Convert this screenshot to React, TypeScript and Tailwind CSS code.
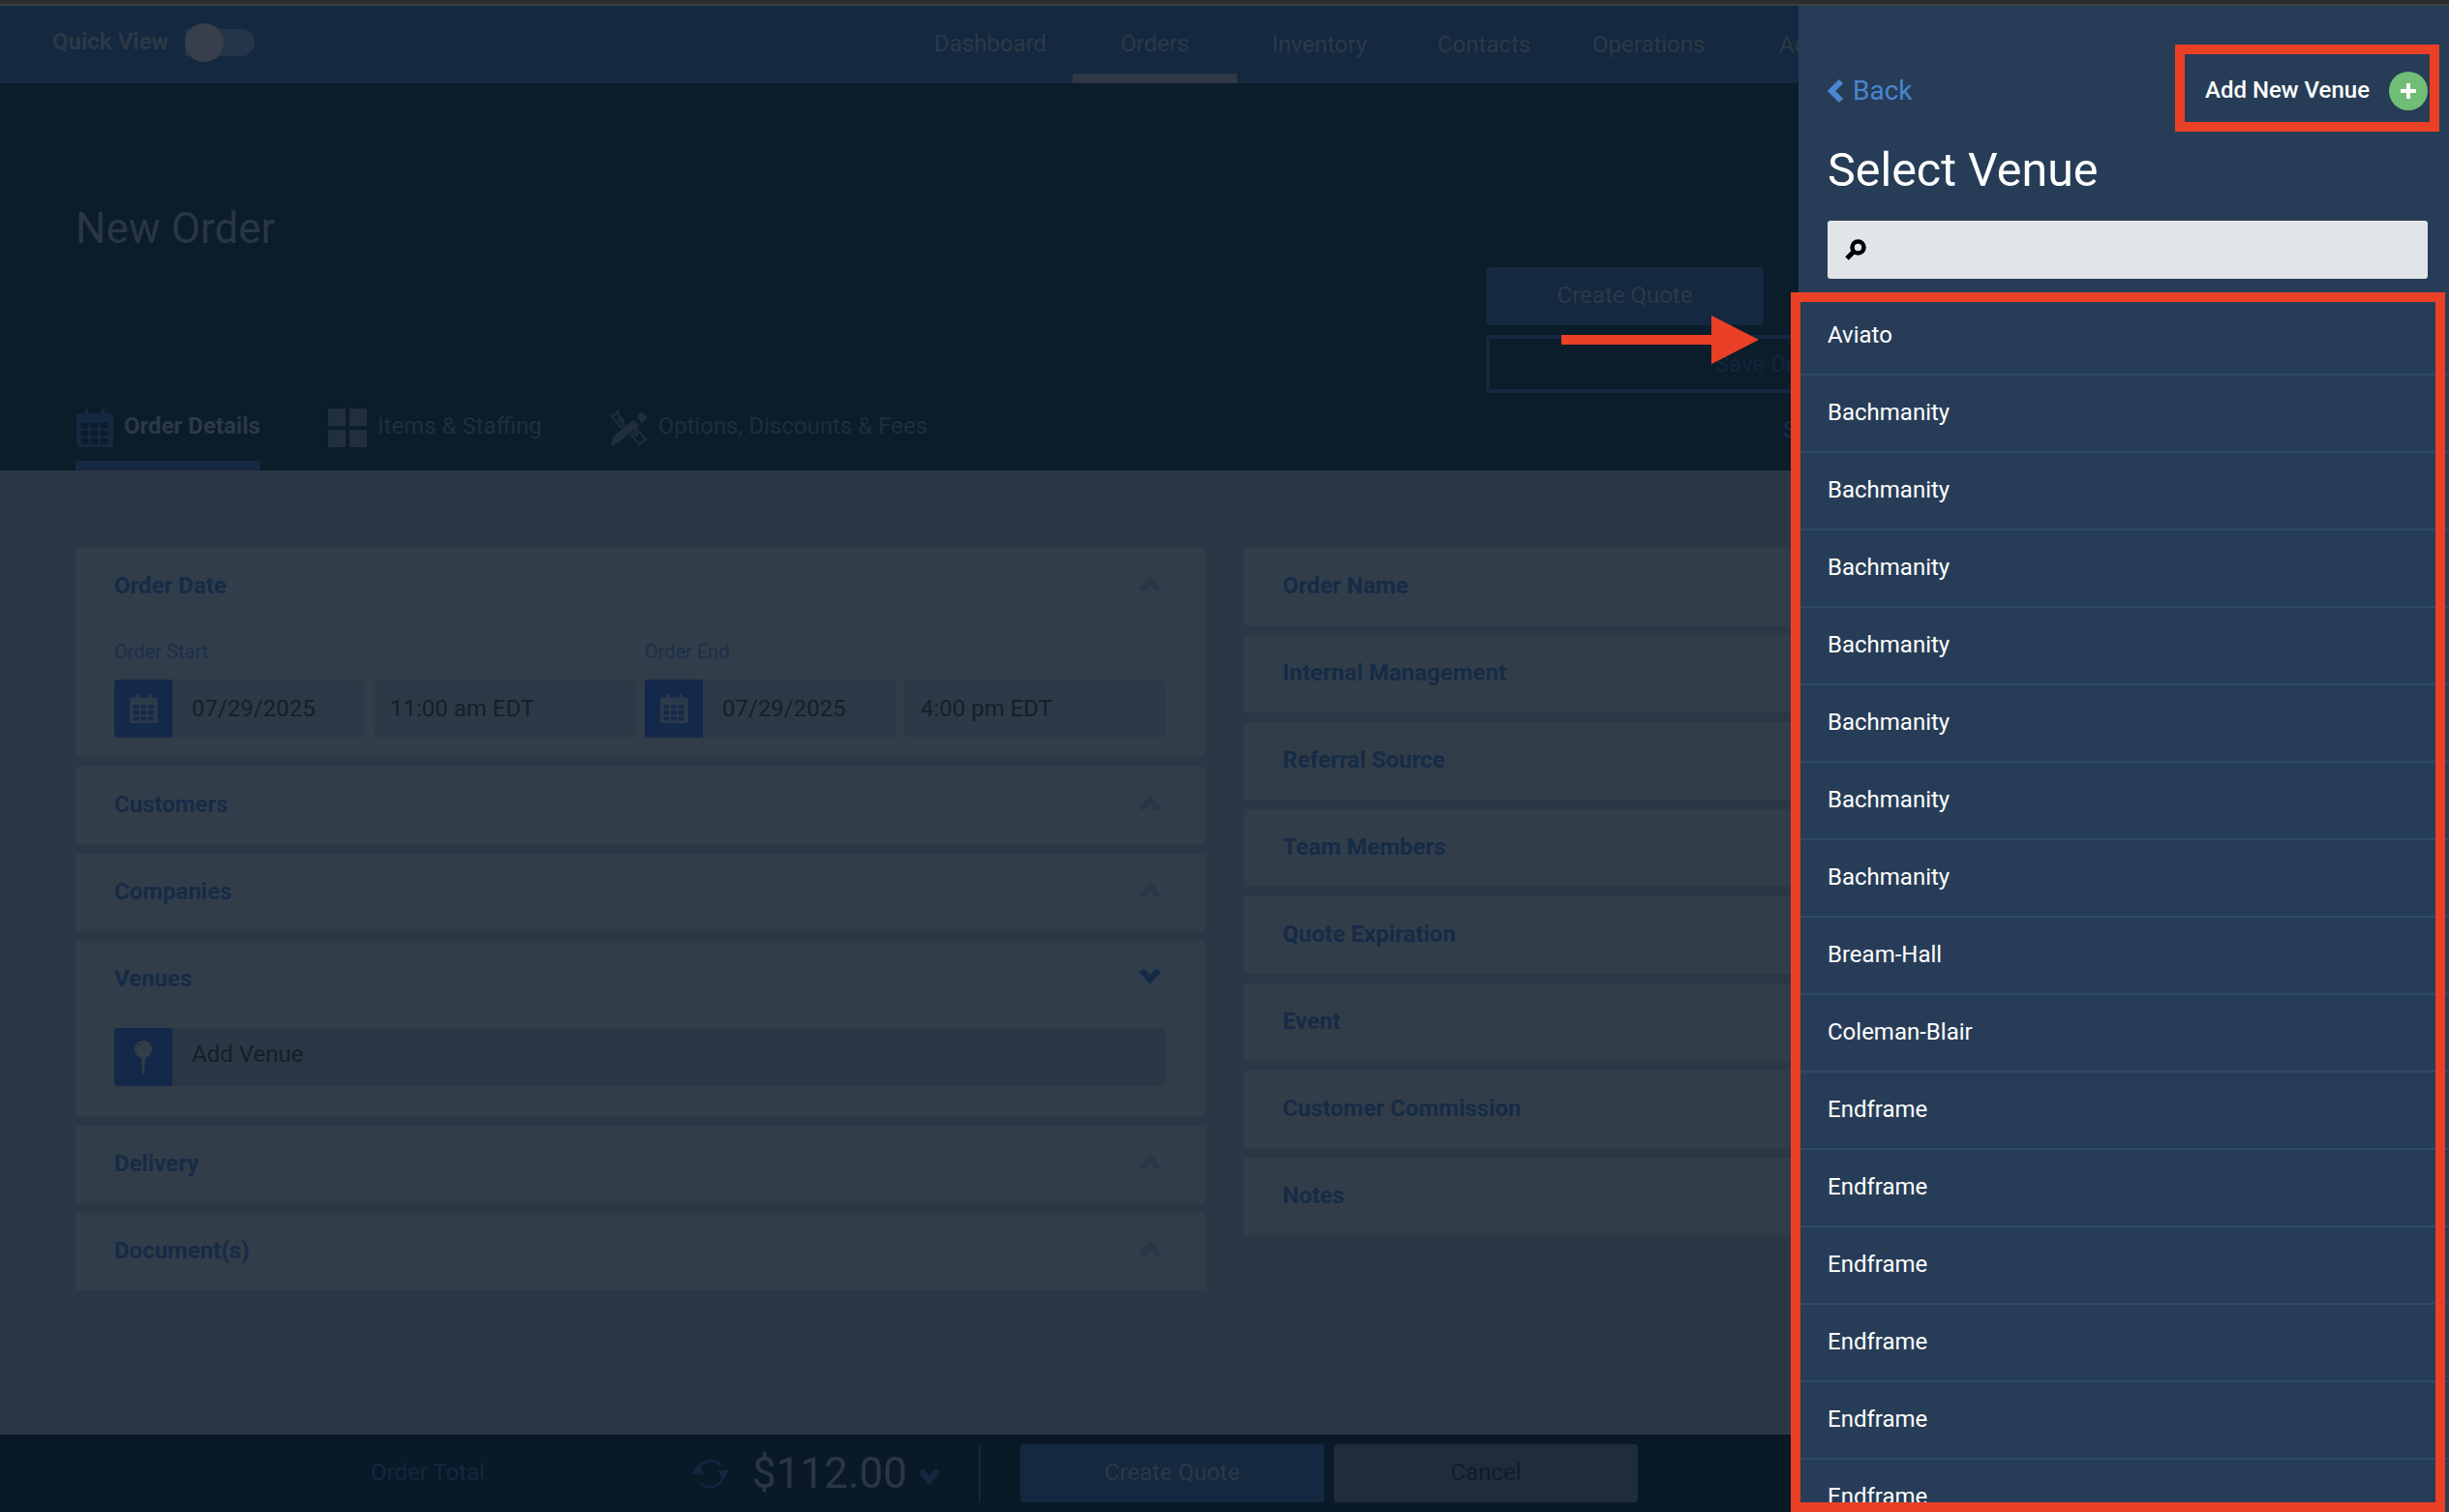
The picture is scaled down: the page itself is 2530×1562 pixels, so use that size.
import React from 'react';

const ChevronUp = ({ className }: { className: string }) => (
  <svg viewBox="0 0 24 16" className={className} fill="none" stroke="currentColor" strokeWidth="6.5">
    <polyline points="3,15 12,5 21,15" />
  </svg>
);

const ChevronDown = ({ className }: { className: string }) => (
  <svg viewBox="0 0 24 16" className={className} fill="none" stroke="currentColor" strokeWidth="6.5">
    <polyline points="3,1 12,11 21,1" />
  </svg>
);

const Calendar = ({ className, dots }: { className: string; dots: string }) => {
  const cells = [];
  for (let r = 0; r < 3; r++) {
    for (let c = 0; c < 3; c++) {
      cells.push(<rect key={`${r}${c}`} x={5 + c * 10.5} y={15.5 + r * 8.5} width="8" height="6" fill={dots} />);
    }
  }
  return (
    <svg viewBox="0 0 40 42" className={className} fill="currentColor">
      <rect x="0" y="5" width="40" height="37" rx="3" />
      <rect x="9" y="0" width="4" height="8" rx="1.5" />
      <rect x="27" y="0" width="4" height="8" rx="1.5" />
      {cells}
    </svg>
  );
};

const GridIcon = () => (
  <svg viewBox="0 0 40 40" className="w-[40px] h-[40px] shrink-0" fill="#212e3f">
    <rect x="0" y="0" width="18" height="18" />
    <rect x="22" y="0" width="18" height="18" />
    <rect x="0" y="22" width="18" height="18" />
    <rect x="22" y="22" width="18" height="18" />
  </svg>
);

// pencil over a broken ruler
const ToolsIcon = () => (
  <svg viewBox="0 0 40 40" className="w-[38px] h-[40px] shrink-0">
    <path d="M28 8l6-6 6 7-6 6zM25 11l6 6-21 18-10 5 3-11z" fill="#1f2d3e" />
    <path d="M8 2L1 8l11 12 3-3-3-3 2-2-2-2-2 2-2-2 2-2-2-2z" fill="none" stroke="#1f2d3e" strokeWidth="2.2" />
    <path d="M28 21l10 11-7 6-9-10 2-2 3 3 2-2-3-3z" fill="none" stroke="#1f2d3e" strokeWidth="2.2" />
  </svg>
);

const Pin = () => (
  <svg viewBox="0 0 20 36" className="w-[20px] h-[36px]">
    <circle cx="10" cy="10" r="9" fill="#323d4a" />
    <circle cx="6" cy="5" r="1.2" fill="#14294a" />
    <path d="M8 19h4l-1.2 16h-1.6z" fill="#323d4a" />
  </svg>
);

const Refresh = () => (
  <svg viewBox="0 0 40 34" className="w-[40px] h-[34px]" fill="none">
    <path d="M7 14A14 14 0 0 1 31 9" stroke="#14263f" strokeWidth="2.5" />
    <path d="M33 20A14 14 0 0 1 9 27" stroke="#14263f" strokeWidth="2.5" />
    <path d="M0 18L7 8l6 10zM27 14h12l-6 10z" fill="#14263f" />
  </svg>
);

const SearchGlyph = () => (
  <svg viewBox="0 0 22 22" className="w-[22px] h-[22px]">
    <circle cx="13.5" cy="8.5" r="6" fill="none" stroke="#000" strokeWidth="4.5" />
    <path d="M9 13L2 20" stroke="#000" strokeWidth="5" />
  </svg>
);

const Card = ({ title, open, children }: { title: string; open?: boolean; children?: React.ReactNode }) => (
  <div className="bg-[#323d4a]">
    <div className="h-[80px] flex items-center justify-between pl-[40px] pr-[45px]">
      <span className="-mt-[2px] text-[24px] font-bold text-[#162b46]">{title}</span>
      {open ? (
        <ChevronDown className="w-[24px] h-[16px] -mt-[6px] text-[#142a45]" />
      ) : (
        <ChevronUp className="w-[24px] h-[16px] -mt-[6px] text-[#2a3645]" />
      )}
    </div>
    {children}
  </div>
);

const DateField = ({ label, date, time }: { label: string; date: string; time: string }) => (
  <div className="flex flex-col">
    <span className="text-[20px] leading-[24px] text-[#1b2f49]">{label}</span>
    <div className="flex gap-[10px] mt-[17px]">
      <div className="flex">
        <div className="w-[60px] h-[60px] bg-[#14294a] rounded-l-[4px] flex items-center justify-center">
          <Calendar className="w-[29px] h-[30px] text-[#2d3a49]" dots="#14294a" />
        </div>
        <div className="w-[199px] h-[60px] bg-[#2d3946] rounded-r-[4px] pl-[20px] flex items-center text-[24px] text-[#161f2a]">
          {date}
        </div>
      </div>
      <div className="w-[269px] h-[60px] bg-[#2d3946] rounded-[4px] pl-[16px] flex items-center text-[24px] text-[#161f2a]">
        {time}
      </div>
    </div>
  </div>
);

const venues = [
  'Aviato',
  'Bachmanity',
  'Bachmanity',
  'Bachmanity',
  'Bachmanity',
  'Bachmanity',
  'Bachmanity',
  'Bachmanity',
  'Bream-Hall',
  'Coleman-Blair',
  'Endframe',
  'Endframe',
  'Endframe',
  'Endframe',
  'Endframe',
  'Endframe',
];

const rightCards = [
  'Order Name',
  'Internal Management',
  'Referral Source',
  'Team Members',
  'Quote Expiration',
  'Event',
  'Customer Commission',
  'Notes',
];

export default function App() {
  return (
    <div className="relative w-[2530px] h-[1562px] overflow-hidden flex flex-col bg-[#2b3744] font-['Roboto',sans-serif]">
      <div className="h-[4px] bg-[#2c2c2c] shrink-0" />
      <div className="h-[2px] bg-[#3a3f45] shrink-0" />

      {/* nav */}
      <div className="h-[80px] shrink-0 bg-[#14283f] flex items-center pl-[54px] text-[24px] text-[#2c3947]">
        <span className="-mt-[6px] font-bold w-[121px] whitespace-nowrap">Quick View</span>
        <div className="relative -mt-[4px] w-[72px] h-[28px] ml-[16px] rounded-r-full bg-[#24354a]">
          <div className="absolute left-0 -top-[6px] w-[40px] h-[40px] rounded-full bg-[#363f4b]" />
        </div>
        <span className="ml-[702px] w-[143px] h-[80px] leading-[78px]">Dashboard</span>
        <div className="w-[170px] h-[80px] border-b-[10px] border-[#2e3945] text-center leading-[78px]">Orders</div>
        <span className="ml-[36px] w-[171px] leading-[78px]">Inventory</span>
        <span className="w-[160px] leading-[78px]">Contacts</span>
        <span className="w-[193px] leading-[78px]">Operations</span>
        <span className="leading-[78px]">Admin</span>
      </div>

      {/* hero */}
      <div className="h-[400px] shrink-0 bg-[#0b1c2b] flex">
        <div className="w-[1535px] shrink-0 pl-[78px] flex flex-col">
          <h1 className="mt-[124px] text-[44px] leading-[52px] font-normal text-[#2a3644]">New Order</h1>
          <div className="mt-auto flex items-start">
            <div className="flex gap-[10px] h-[64px] w-[191px] border-b-[10px] border-[#14283f]">
              <Calendar className="w-[40px] h-[40px] text-[#14283f]" dots="#0b1c2b" />
              <span className="text-[24px] leading-[37px] font-bold text-[#2c3947] whitespace-nowrap">Order Details</span>
            </div>
            <div className="ml-[70px] flex gap-[11px]">
              <GridIcon />
              <span className="text-[24px] leading-[37px] text-[#212e3f] whitespace-nowrap">Items &amp; Staffing</span>
            </div>
            <div className="ml-[71px] flex gap-[11px]">
              <ToolsIcon />
              <span className="text-[24px] leading-[37px] text-[#1f2d3e] whitespace-nowrap">Options, Discounts &amp; Fees</span>
            </div>
          </div>
        </div>
        <div className="pt-[190px] flex flex-col shrink-0">
          <div className="w-[287px] h-[60px] pb-[2px] bg-[#14283f] rounded-[4px] flex items-center justify-center text-[24px] text-[#2c3947]">
            Create Quote
          </div>
          <div className="w-[584px] h-[60px] mt-[10px] border-[4px] border-[#14283f] rounded-[4px] flex items-center justify-center text-[24px] text-[#14263d]">
            Save Draft
          </div>
          <span className="ml-[307px] mt-[20px] text-[24px] text-[#212e3f]">S</span>
        </div>
      </div>

      {/* content */}
      <div className="flex-1 flex pl-[78px] pt-[80px] gap-[40px]">
        <div className="w-[1167px] shrink-0 flex flex-col gap-[10px]">
          <Card title="Order Date">
            <div className="pl-[40px] pt-[15px] pb-[20px] flex gap-[10px]">
              <DateField label="Order Start" date="07/29/2025" time="11:00 am EDT" />
              <DateField label="Order End" date="07/29/2025" time="4:00 pm EDT" />
            </div>
          </Card>
          <Card title="Customers" />
          <Card title="Companies" />
          <Card title="Venues" open>
            <div className="pl-[40px] pr-[41px] pt-[10px] pb-[31px]">
              <div className="flex h-[60px] bg-[#2b3744] rounded-[4px]">
                <div className="w-[60px] h-[60px] bg-[#14294a] rounded-l-[4px] flex items-center justify-center">
                  <Pin />
                </div>
                <span className="pl-[20px] leading-[54px] text-[24px] text-[#161f2a]">Add Venue</span>
              </div>
            </div>
          </Card>
          <Card title="Delivery" />
          <Card title="Document(s)" />
        </div>
        <div className="flex-1 flex flex-col gap-[10px]">
          {rightCards.map((name) => (
            <div key={name} className="h-[80px] pb-[2px] bg-[#323d4a] pl-[40px] flex items-center text-[24px] font-bold text-[#162b46]">
              {name}
            </div>
          ))}
        </div>
      </div>

      {/* footer */}
      <div className="h-[80px] shrink-0 bg-[#091927] flex items-center pl-[383px]">
        <span className="w-[331px] pb-[2px] text-[24px] text-[#16263f]">Order Total:</span>
        <Refresh />
        <span className="ml-[23px] text-[44px] leading-[56px] text-[#2a3644]">$112.00</span>
        <ChevronDown className="ml-[11px] mt-[8px] w-[24px] h-[16px] text-[#16263f]" />
        <div className="ml-[39px] w-[2px] h-[60px] bg-[#14263d]" />
        <div className="ml-[41px] w-[314px] h-[60px] pb-[2px] bg-[#14283f] rounded-[4px] flex items-center justify-center text-[24px] text-[#2c3947]">
          Create Quote
        </div>
        <div className="ml-[10px] w-[314px] h-[60px] pb-[2px] bg-[#1e2c3c] rounded-[4px] flex items-center justify-center text-[24px] text-[#0f1c2b]">
          Cancel
        </div>
      </div>

      {/* venue panel */}
      <div className="absolute right-0 top-[6px] bottom-0 w-[672px] bg-[#273d57] flex flex-col overflow-hidden">
        <div className="mt-[68px] h-[40px] pl-[30px] pr-[22px] flex items-center justify-between">
          <div className="flex items-center gap-[10px] text-[#4a86d0]">
            <svg viewBox="0 0 16 26" className="w-[16px] h-[26px]" fill="none" stroke="currentColor" strokeWidth="6">
              <polyline points="14,3 4,13 14,23" />
            </svg>
            <span className="text-[28px]">Back</span>
          </div>
          <div className="flex items-center gap-[20px] text-white">
            <span className="-mt-[2px] text-[24px] font-medium">Add New Venue</span>
            <div className="w-[40px] h-[40px] rounded-full bg-[#6fbd77] flex items-center justify-center">
              <svg viewBox="0 0 18 18" className="w-[18px] h-[18px]" fill="#fff">
                <rect x="7" y="1" width="4" height="16" />
                <rect x="1" y="7" width="16" height="4" />
              </svg>
            </div>
          </div>
        </div>
        <h2 className="mt-[34px] pl-[30px] text-[48.4px] leading-[56px] font-normal text-white">Select Venue</h2>
        <div className="mt-[24px] ml-[30px] w-[620px] h-[60px] shrink-0 bg-[#e1e4e9] rounded-[3px] flex items-center pl-[18px]">
          <SearchGlyph />
        </div>
        <div className="mt-[20px] flex flex-col">
          {venues.map((name, i) => (
            <div key={i} className="h-[80px] shrink-0 border-b-2 border-[#2e4a68] pl-[30px] pb-[2px] flex items-center text-[24px] text-white">
              {name}
            </div>
          ))}
        </div>
      </div>

      {/* annotations */}
      <div className="absolute left-[2247px] top-[46px] w-[273px] h-[90px] border-[10px] border-[#ea4025]" />
      <div className="absolute left-[1850px] top-[302px] w-[676px] h-[1260px] border-[10px] border-[#ea4025]" />
      <svg viewBox="0 0 204 50" className="absolute left-[1613px] top-[326px] w-[204px] h-[50px]" fill="#ea4025">
        <polygon points="0,20 155,20 155,0 204,25 155,50 155,30 0,30" />
      </svg>
    </div>
  );
}
